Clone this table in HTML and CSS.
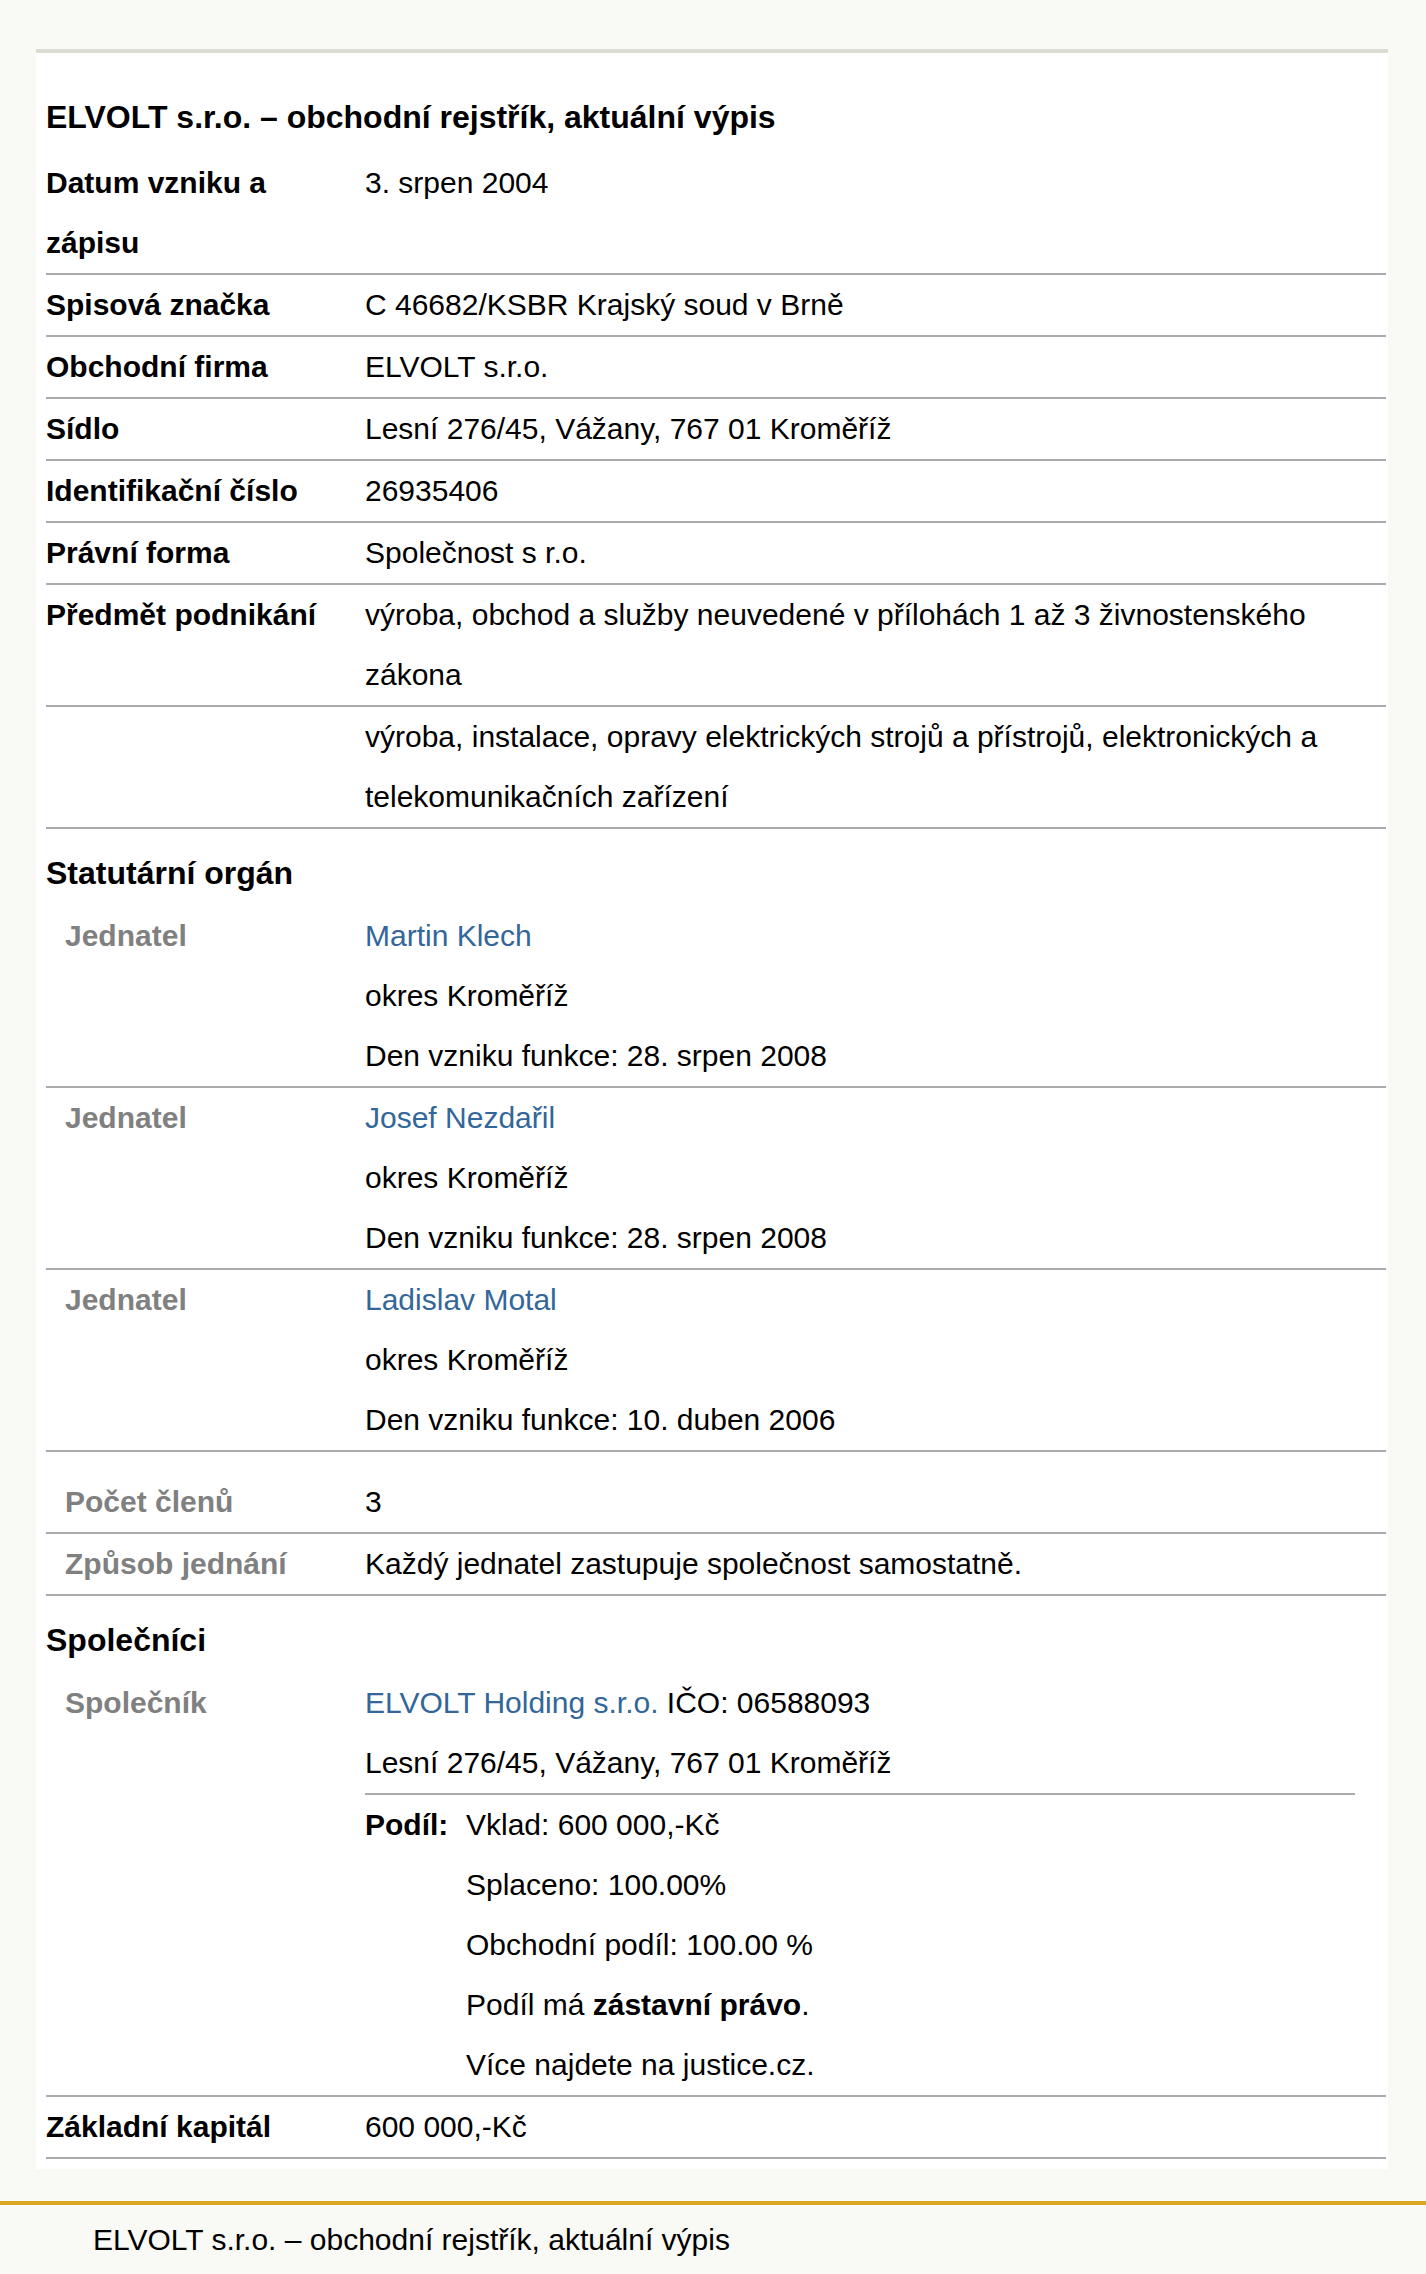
FILE: index.html
```html
<!DOCTYPE html>
<html lang="cs">
<head>
<meta charset="utf-8">
<title>ELVOLT s.r.o. – obchodní rejstřík, aktuální výpis</title>
<link rel="stylesheet" href="styles.css">
</head>
<body>
<main class="card">
  <h1 class="title">ELVOLT s.r.o. – obchodní rejstřík, aktuální výpis</h1>

  <div class="row"><div class="label">Datum vzniku a zápisu</div><div class="value">3. srpen 2004</div></div>
  <div class="row"><div class="label">Spisová značka</div><div class="value">C 46682/KSBR Krajský soud v Brně</div></div>
  <div class="row"><div class="label">Obchodní firma</div><div class="value">ELVOLT s.r.o.</div></div>
  <div class="row"><div class="label">Sídlo</div><div class="value">Lesní 276/45, Vážany, 767 01 Kroměříž</div></div>
  <div class="row"><div class="label">Identifikační číslo</div><div class="value">26935406</div></div>
  <div class="row"><div class="label">Právní forma</div><div class="value">Společnost s r.o.</div></div>
  <div class="row"><div class="label">Předmět podnikání</div><div class="value">výroba, obchod a služby neuvedené v přílohách 1 až 3 živnostenského zákona</div></div>
  <div class="row"><div class="label"></div><div class="value">výroba, instalace, opravy elektrických strojů a přístrojů, elektronických a telekomunikačních zařízení</div></div>

  <h2 class="section">Statutární orgán</h2>
  <div class="group">
    <div class="row sub"><div class="label">Jednatel</div><div class="value"><a href="#">Martin Klech</a><br>okres Kroměříž<br>Den vzniku funkce: 28. srpen 2008</div></div>
    <div class="row sub"><div class="label">Jednatel</div><div class="value"><a href="#">Josef Nezdařil</a><br>okres Kroměříž<br>Den vzniku funkce: 28. srpen 2008</div></div>
    <div class="row sub"><div class="label">Jednatel</div><div class="value"><a href="#">Ladislav Motal</a><br>okres Kroměříž<br>Den vzniku funkce: 10. duben 2006</div></div>
  </div>
  <div class="row sub"><div class="label">Počet členů</div><div class="value">3</div></div>
  <div class="row sub"><div class="label">Způsob jednání</div><div class="value">Každý jednatel zastupuje společnost samostatně.</div></div>

  <h2 class="section">Společníci</h2>
  <div class="row sub">
    <div class="label">Společník</div>
    <div class="value">
      <div class="owner"><a href="#">ELVOLT Holding s.r.o.</a> IČO: 06588093<br>Lesní 276/45, Vážany, 767 01 Kroměříž</div>
      <div class="share">
        <div class="share-label">Podíl:</div>
        <div class="share-items">
          <div>Vklad: 600 000,-Kč</div>
          <div>Splaceno: 100.00%</div>
          <div>Obchodní podíl: 100.00 %</div>
          <div>Podíl má <b>zástavní právo</b>.</div>
          <div>Více najdete na justice.cz.</div>
        </div>
      </div>
    </div>
  </div>
  <div class="row"><div class="label">Základní kapitál</div><div class="value">600 000,-Kč</div></div>
</main>
<footer class="footer">ELVOLT s.r.o. – obchodní rejstřík, aktuální výpis</footer>
</body>
</html>
```
FILE: styles.css
```css
html, body {
  margin: 0;
  padding: 0;
}
body {
  background: #f9f9f5;
  font-family: "Liberation Sans", Arial, sans-serif;
  font-size: 30px;
  line-height: 60px;
  color: #000;
}
.card {
  margin: 49px 38px 0 36px;
  background: #fff;
  border-top: 4px solid #dcdcd2;
  padding: 0 2px 10px 10px;
}
.title {
  font-size: 32px;
  font-weight: bold;
  line-height: 60px;
  margin: 34px 0 6px;
}
.section {
  font-size: 32px;
  font-weight: bold;
  line-height: 60px;
  margin: 14px 0 3px;
}
.row {
  display: grid;
  grid-template-columns: 319px 1fr;
  border-bottom: 2px solid #aaaaaa;
}
.label {
  font-weight: bold;
}
.sub .label {
  padding-left: 19px;
  color: #808080;
}
.group {
  margin-bottom: 20px;
}
a {
  color: #336699;
  text-decoration: none;
}
.owner {
  border-bottom: 2px solid #aaaaaa;
  margin-right: 31px;
}
.share {
  display: grid;
  grid-template-columns: 101px 1fr;
}
.share-label {
  font-weight: bold;
}
.footer {
  margin-top: 32px;
  border-top: 4px solid #daa520;
  padding: 5px 0 8px 93px;
}
```
